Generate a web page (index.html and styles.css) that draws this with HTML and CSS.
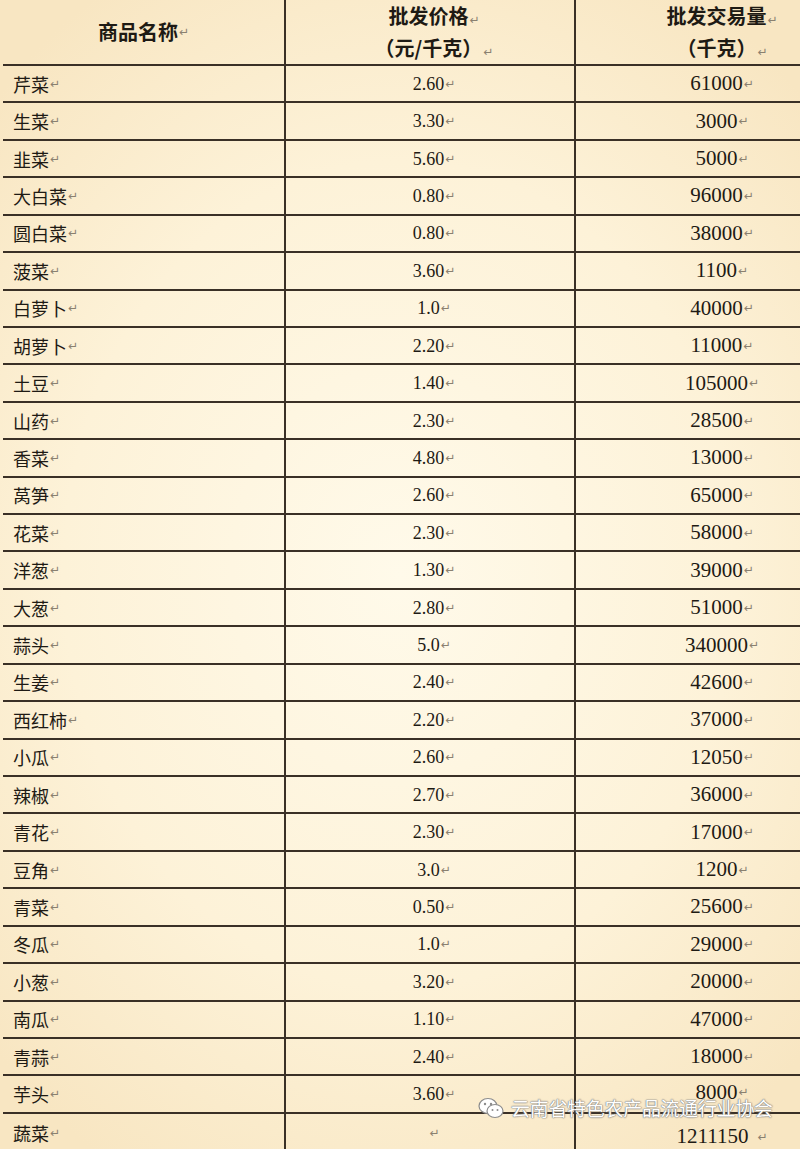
FILE: index.html
```html
<!DOCTYPE html>
<html lang="zh-CN">
<head>
<meta charset="utf-8">
<title>蔬菜批发</title>
<link rel="stylesheet" href="styles.css">
</head>
<body>
<div class="sheet">
  <div class="row head">
    <div class="cell c1"><span class="hd">商品名称</span><span class="m">↵</span></div>
    <div class="cell c2 two"><div><span class="hd">批发价格</span><span class="m">↵</span></div><div><span class="hd">（元/千克）</span><span class="m">↵</span></div></div>
    <div class="cell c3 two"><div><span class="hd">批发交易量</span><span class="m">↵</span></div><div><span class="hd">（千克）</span><span class="m">↵</span></div></div>
  </div>
  <div class="row"><div class="cell c1">芹菜<span class="m">↵</span></div><div class="cell c2"><span class="n">2.60</span><span class="m">↵</span></div><div class="cell c3"><span class="q">61000</span><span class="m">↵</span></div></div>
  <div class="row"><div class="cell c1">生菜<span class="m">↵</span></div><div class="cell c2"><span class="n">3.30</span><span class="m">↵</span></div><div class="cell c3"><span class="q">3000</span><span class="m">↵</span></div></div>
  <div class="row"><div class="cell c1">韭菜<span class="m">↵</span></div><div class="cell c2"><span class="n">5.60</span><span class="m">↵</span></div><div class="cell c3"><span class="q">5000</span><span class="m">↵</span></div></div>
  <div class="row"><div class="cell c1">大白菜<span class="m">↵</span></div><div class="cell c2"><span class="n">0.80</span><span class="m">↵</span></div><div class="cell c3"><span class="q">96000</span><span class="m">↵</span></div></div>
  <div class="row"><div class="cell c1">圆白菜<span class="m">↵</span></div><div class="cell c2"><span class="n">0.80</span><span class="m">↵</span></div><div class="cell c3"><span class="q">38000</span><span class="m">↵</span></div></div>
  <div class="row"><div class="cell c1">菠菜<span class="m">↵</span></div><div class="cell c2"><span class="n">3.60</span><span class="m">↵</span></div><div class="cell c3"><span class="q">1100</span><span class="m">↵</span></div></div>
  <div class="row"><div class="cell c1">白萝卜<span class="m">↵</span></div><div class="cell c2"><span class="n">1.0</span><span class="m">↵</span></div><div class="cell c3"><span class="q">40000</span><span class="m">↵</span></div></div>
  <div class="row"><div class="cell c1">胡萝卜<span class="m">↵</span></div><div class="cell c2"><span class="n">2.20</span><span class="m">↵</span></div><div class="cell c3"><span class="q">11000</span><span class="m">↵</span></div></div>
  <div class="row"><div class="cell c1">土豆<span class="m">↵</span></div><div class="cell c2"><span class="n">1.40</span><span class="m">↵</span></div><div class="cell c3"><span class="q">105000</span><span class="m">↵</span></div></div>
  <div class="row"><div class="cell c1">山药<span class="m">↵</span></div><div class="cell c2"><span class="n">2.30</span><span class="m">↵</span></div><div class="cell c3"><span class="q">28500</span><span class="m">↵</span></div></div>
  <div class="row"><div class="cell c1">香菜<span class="m">↵</span></div><div class="cell c2"><span class="n">4.80</span><span class="m">↵</span></div><div class="cell c3"><span class="q">13000</span><span class="m">↵</span></div></div>
  <div class="row"><div class="cell c1">莴笋<span class="m">↵</span></div><div class="cell c2"><span class="n">2.60</span><span class="m">↵</span></div><div class="cell c3"><span class="q">65000</span><span class="m">↵</span></div></div>
  <div class="row"><div class="cell c1">花菜<span class="m">↵</span></div><div class="cell c2"><span class="n">2.30</span><span class="m">↵</span></div><div class="cell c3"><span class="q">58000</span><span class="m">↵</span></div></div>
  <div class="row"><div class="cell c1">洋葱<span class="m">↵</span></div><div class="cell c2"><span class="n">1.30</span><span class="m">↵</span></div><div class="cell c3"><span class="q">39000</span><span class="m">↵</span></div></div>
  <div class="row"><div class="cell c1">大葱<span class="m">↵</span></div><div class="cell c2"><span class="n">2.80</span><span class="m">↵</span></div><div class="cell c3"><span class="q">51000</span><span class="m">↵</span></div></div>
  <div class="row"><div class="cell c1">蒜头<span class="m">↵</span></div><div class="cell c2"><span class="n">5.0</span><span class="m">↵</span></div><div class="cell c3"><span class="q">340000</span><span class="m">↵</span></div></div>
  <div class="row"><div class="cell c1">生姜<span class="m">↵</span></div><div class="cell c2"><span class="n">2.40</span><span class="m">↵</span></div><div class="cell c3"><span class="q">42600</span><span class="m">↵</span></div></div>
  <div class="row"><div class="cell c1">西红柿<span class="m">↵</span></div><div class="cell c2"><span class="n">2.20</span><span class="m">↵</span></div><div class="cell c3"><span class="q">37000</span><span class="m">↵</span></div></div>
  <div class="row"><div class="cell c1">小瓜<span class="m">↵</span></div><div class="cell c2"><span class="n">2.60</span><span class="m">↵</span></div><div class="cell c3"><span class="q">12050</span><span class="m">↵</span></div></div>
  <div class="row"><div class="cell c1">辣椒<span class="m">↵</span></div><div class="cell c2"><span class="n">2.70</span><span class="m">↵</span></div><div class="cell c3"><span class="q">36000</span><span class="m">↵</span></div></div>
  <div class="row"><div class="cell c1">青花<span class="m">↵</span></div><div class="cell c2"><span class="n">2.30</span><span class="m">↵</span></div><div class="cell c3"><span class="q">17000</span><span class="m">↵</span></div></div>
  <div class="row"><div class="cell c1">豆角<span class="m">↵</span></div><div class="cell c2"><span class="n">3.0</span><span class="m">↵</span></div><div class="cell c3"><span class="q">1200</span><span class="m">↵</span></div></div>
  <div class="row"><div class="cell c1">青菜<span class="m">↵</span></div><div class="cell c2"><span class="n">0.50</span><span class="m">↵</span></div><div class="cell c3"><span class="q">25600</span><span class="m">↵</span></div></div>
  <div class="row"><div class="cell c1">冬瓜<span class="m">↵</span></div><div class="cell c2"><span class="n">1.0</span><span class="m">↵</span></div><div class="cell c3"><span class="q">29000</span><span class="m">↵</span></div></div>
  <div class="row"><div class="cell c1">小葱<span class="m">↵</span></div><div class="cell c2"><span class="n">3.20</span><span class="m">↵</span></div><div class="cell c3"><span class="q">20000</span><span class="m">↵</span></div></div>
  <div class="row"><div class="cell c1">南瓜<span class="m">↵</span></div><div class="cell c2"><span class="n">1.10</span><span class="m">↵</span></div><div class="cell c3"><span class="q">47000</span><span class="m">↵</span></div></div>
  <div class="row"><div class="cell c1">青蒜<span class="m">↵</span></div><div class="cell c2"><span class="n">2.40</span><span class="m">↵</span></div><div class="cell c3"><span class="q">18000</span><span class="m">↵</span></div></div>
  <div class="row"><div class="cell c1">芋头<span class="m">↵</span></div><div class="cell c2"><span class="n">3.60</span><span class="m">↵</span></div><div class="cell c3 up"><span class="q">8000</span><span class="m">↵</span></div></div>
  <div class="row last"><div class="cell c1">蔬菜<span class="m">↵</span></div><div class="cell c2"><span class="m">↵</span></div><div class="cell c3 low"><span class="q">1211150</span><span class="m sp">↵</span></div></div>
  <div class="mark">
    <svg class="wx" width="28" height="24" viewBox="0 0 28 24">
      <ellipse cx="11" cy="10" rx="9" ry="7.5" fill="#fff" stroke="#8c8c8c" stroke-width="1.2"/>
      <ellipse cx="18" cy="15" rx="8" ry="6.5" fill="#fff" stroke="#8c8c8c" stroke-width="1.2"/>
      <circle cx="8" cy="8" r="1.2" fill="#8c8c8c"/>
      <circle cx="14" cy="8" r="1.2" fill="#8c8c8c"/>
      <circle cx="15.5" cy="14" r="1" fill="#8c8c8c"/>
      <circle cx="20.5" cy="14" r="1" fill="#8c8c8c"/>
    </svg>
    <span class="mtext">云南省特色农产品流通行业协会</span>
  </div>
</div>
</body>
</html>
```
FILE: styles.css
```css
html, body {
  margin: 0;
  padding: 0;
}
body {
  width: 800px;
  height: 1149px;
  overflow: hidden;
  background: radial-gradient(ellipse 70% 60% at 50% 50%, #fffaea 0%, #fdf2d8 60%, #f8e6c2 100%);
  font-family: "Noto Sans CJK SC", "Liberation Serif", serif;
  color: #1e1a14;
}
.sheet {
  position: relative;
  margin-left: 3px;
  width: 797px;
}
.row {
  display: grid;
  grid-template-columns: 283px 290px 224px;
  height: 37.43px;
  box-sizing: border-box;
  border-bottom: 2px solid #3a3026;
}
.row.head {
  height: 66px;
}
.row.last {
  border-bottom: none;
}
.cell {
  display: flex;
  align-items: center;
  box-sizing: border-box;
  font-size: 18px;
  line-height: 1;
}
.c1 {
  border-right: 2px solid #3a3026;
  padding-left: 10px;
}
.c2 {
  border-right: 2px solid #3a3026;
  justify-content: center;
  padding-left: 8px;
}
.c3 {
  justify-content: center;
  padding-left: 68px;
}
.head .c1 {
  justify-content: center;
  padding-left: 0;
}
.two {
  flex-direction: column;
  justify-content: center;
  gap: 12px;
}
.hd {
  font-weight: bold;
  font-size: 20px;
}
.n {
  font-family: "Liberation Serif", serif;
  font-size: 18px;
}
.q {
  font-family: "Liberation Serif", serif;
  font-size: 21px;
}
.m {
  font-family: "DejaVu Sans", sans-serif;
  font-size: 12px;
  color: #8a8070;
  margin-left: 1px;
}
.m.sp {
  margin-left: 9px;
}
.up {
  padding-bottom: 4px;
}
.low {
  padding-top: 8px;
}
.mark {
  position: absolute;
  left: 474px;
  top: 1094px;
  display: flex;
  align-items: center;
  gap: 6px;
}
.mtext {
  font-family: "Noto Sans CJK SC", sans-serif;
  font-size: 19px;
  color: #ffffff;
  text-shadow: 0 0 1px #777, 0 0 1px #777, 0 0 2px #999;
  letter-spacing: -0.3px;
}
```
